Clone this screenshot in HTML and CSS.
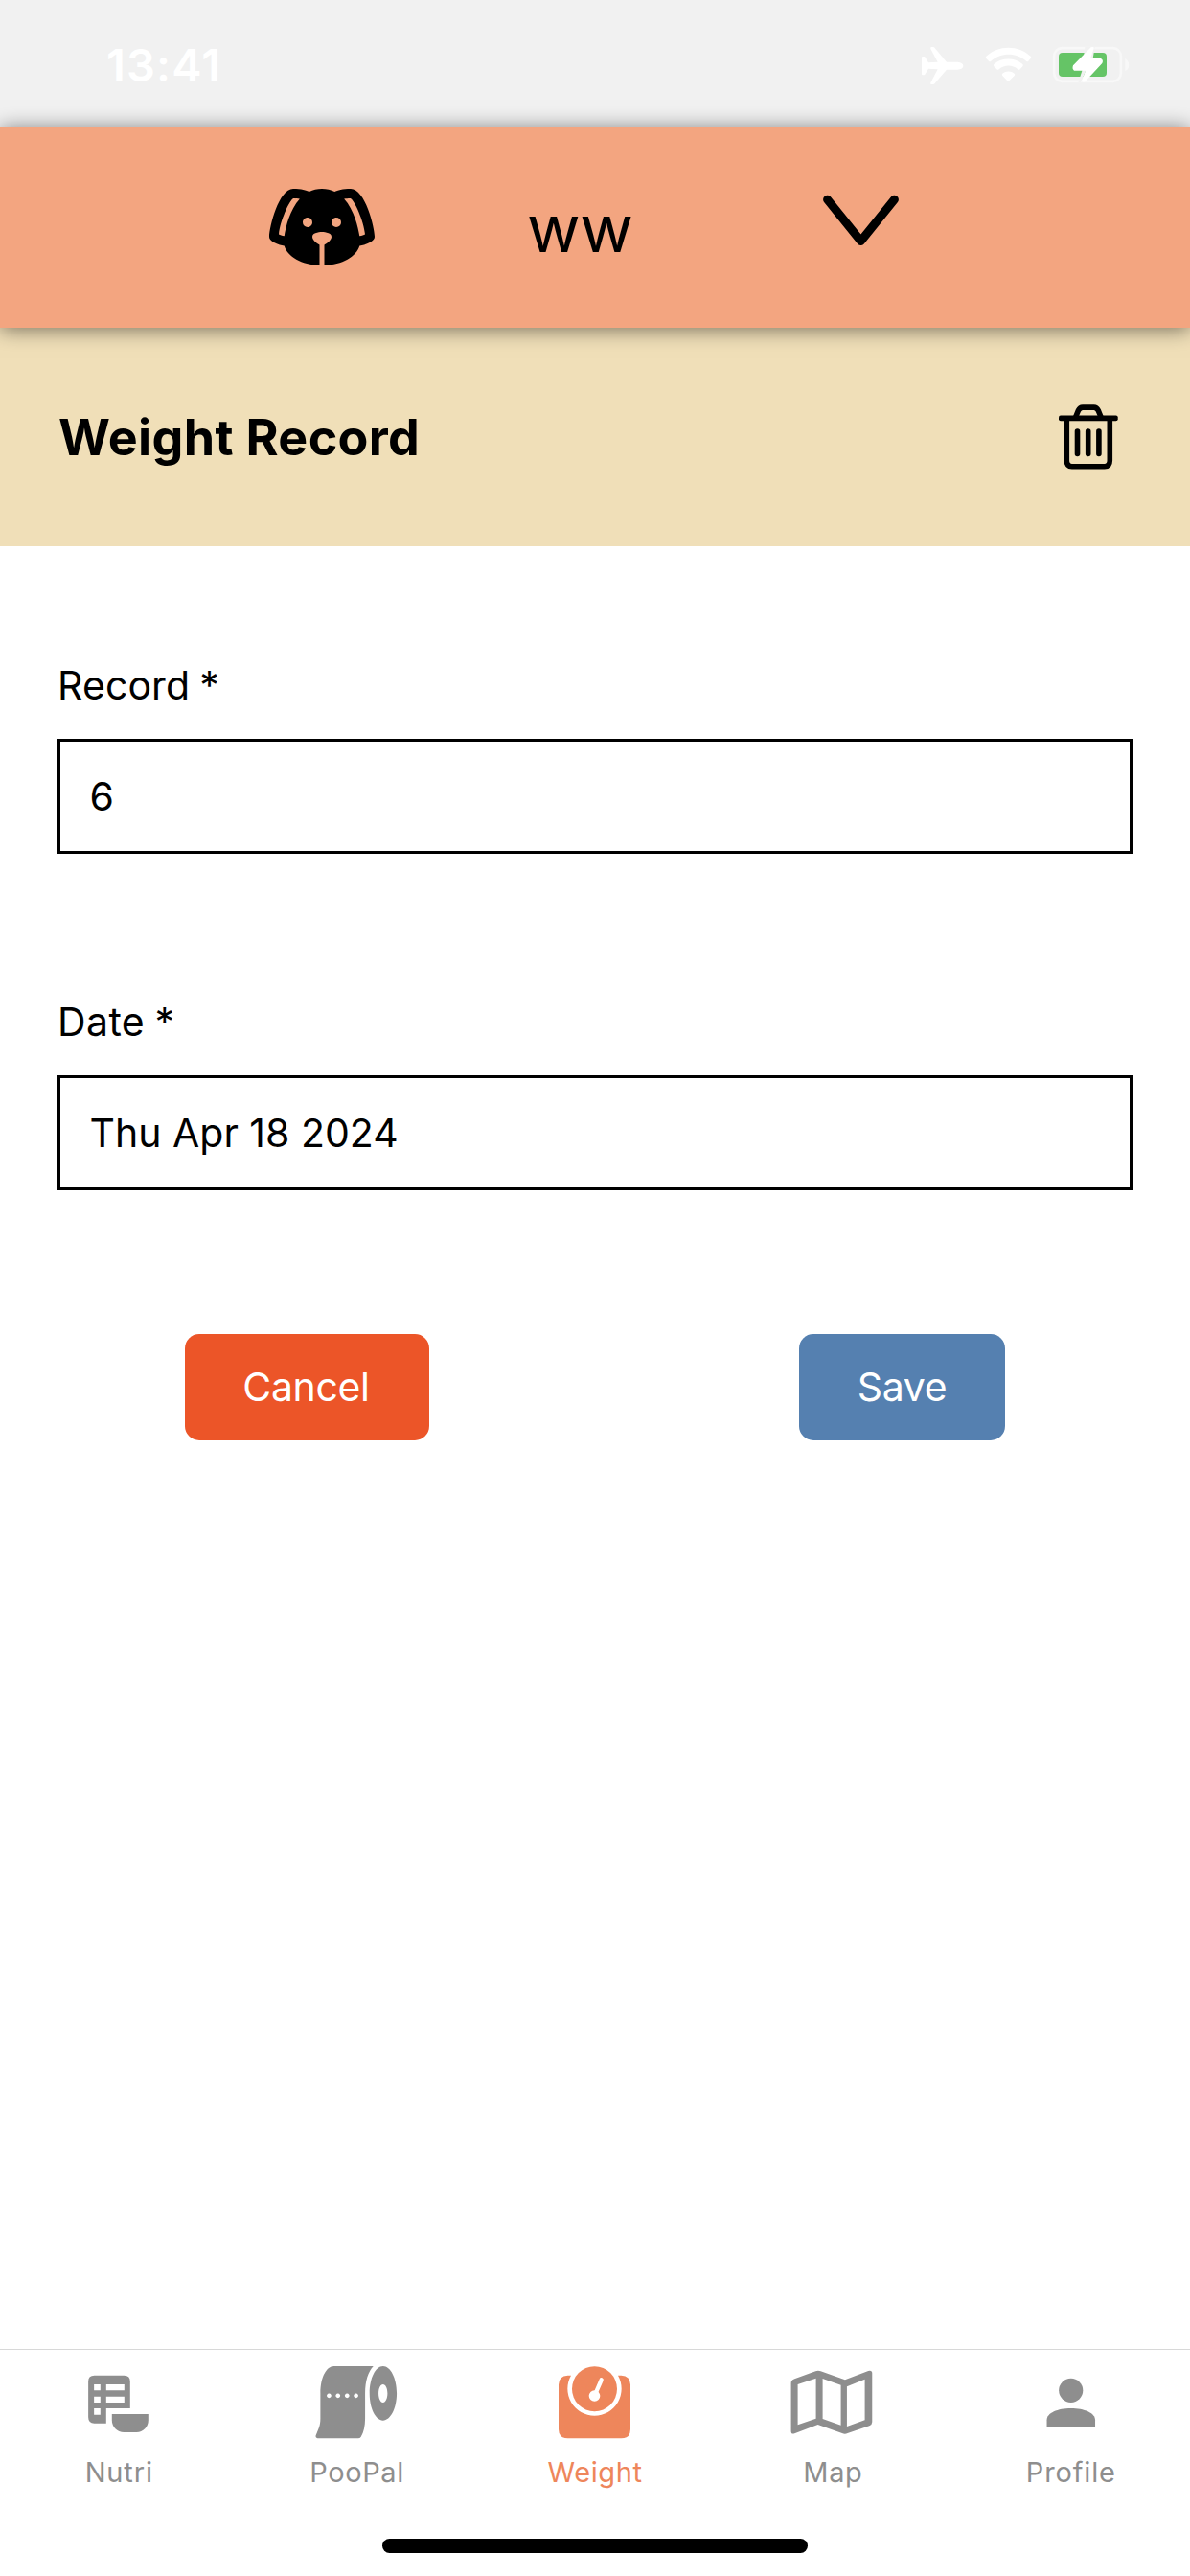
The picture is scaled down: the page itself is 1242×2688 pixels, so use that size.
FILE: index.html
```html
<!DOCTYPE html>
<html lang="en">
<head>
<meta charset="utf-8">
<title>Weight Record</title>
<link rel="stylesheet" href="styles.css">
</head>
<body>
<div class="screen">
  <div class="status">
    <span class="time">13:41</span>
    <div class="status-icons">
      <svg class="plane" width="45" height="42" viewBox="183 144 135 126" fill="#fff"><path d="M186 180q0-3 3-3h5q2 0 3 2l10 17 29-2-22-41q-2-6 3-6h5q3 0 5 3l37 44h34q18 2 18 12t-18 12h-34l-37 43q-2 3-5 3h-6q-4 0-2-5l22-42-29-2-10 17q-2 3-4 3h-4q-3 0-3-3z"/></svg>
      <svg class="wifi" width="49" height="42" viewBox="384 144 147 126" fill="#fff"><path d="M388 176q-3 3 0 7l8 8q3 3 7 0c31-28 79-28 110 0q4 3 7 0l7-8q3-4 0-7c-39-36-100-36-139 0z"/><path d="M412 201q-3 3 0 7l9 9q3 3 7 0c17-15 42-15 59 0q4 3 7 0l8-9q3-4 0-7c-26-22-64-22-90 0z"/><path d="M438 231q-2 3 1 6l15 16q3 3 6 0l16-16q3-3 1-6c-11-10-28-10-39 0z"/></svg>
      <svg class="battery" width="82" height="42" viewBox="594 144 246 126"><rect x="600.500" y="150.500" width="209" height="104" rx="25" fill="none" stroke="#f8f8f8" stroke-width="8"/><path d="M823 183q12 8 12 21t-12 18z" fill="#f8f8f8"/><rect x="615" y="165" width="150" height="75" rx="12" fill="#65c466"/><path d="M697 146 728 146 722 183 700 220 684 258 676 258 688 222Z" fill="#f1f1f1"/><path d="M716 148q3-2 7-1 3 1 2 5l-11 31h33q9 5 4 15l-53 57q-4 3-8 1t-2-6l11-29h-36q-7-5-3-16z" fill="#fff"/></svg>
    </div>
  </div>
  <header class="petbar">
    <svg class="dog" width="120" height="120" viewBox="0 0 24 24"><path d="M18,4C16.29,4 15.25,4.33 14.65,4.61C13.88,4.23 13,4 12,4C11,4 10.12,4.23 9.35,4.61C8.75,4.33 7.71,4 6,4C3,4 1,12 1,14C1,14.83 2.32,15.59 4.14,15.9C4.78,18.14 7.8,19.85 11.5,20V15.72C10.91,15.35 10,14.68 10,14C10,13 12,13 12,13C12,13 14,13 14,14C14,14.68 13.09,15.35 12.5,15.72V20C16.2,19.85 19.22,18.14 19.86,15.9C21.68,15.59 23,14.83 23,14C23,12 21,4 18,4M4.15,13.87C3.65,13.75 3.26,13.61 3,13.5C3.25,10.73 5.2,6.4 6.05,6C6.59,6 7,6.06 7.37,6.11C5.27,8.42 4.44,12.04 4.15,13.87M9,12A1,1 0 0,1 8,11C8,10.46 8.45,10 9,10A1,1 0 0,1 10,11C10,11.56 9.55,12 9,12M15,12A1,1 0 0,1 14,11C14,10.46 14.45,10 15,10A1,1 0 0,1 16,11A1,1 0 0,1 15,12M19.85,13.87C19.56,12.04 18.73,8.42 16.63,6.11C17,6.06 17.41,6 17.95,6C18.8,6.4 20.75,10.73 21,13.5C20.75,13.61 20.36,13.75 19.85,13.87Z"/></svg>
    <span class="petname">ww</span>
    <svg class="chevron" width="80" height="54" viewBox="0 0 80 54" fill="none" stroke="#000" stroke-width="9" stroke-linecap="round" stroke-linejoin="round"><path d="M4.600 5.200 39.500 48.500 74.400 5.200"/></svg>
  </header>
  <section class="titlebar">
    <h1 class="title">Weight Record</h1>
    <svg class="trash" width="62" height="68" viewBox="0 0 62 68" fill="none" stroke="#000" stroke-width="5.600"><rect x="0" y="11.400" width="61.700" height="5.800" rx="2" fill="#000" stroke="none"/><path d="M17.700 13 20.500 6.200Q22 3.100 25 3.100H36.700Q39.700 3.100 41.200 6.200L44 13"/><path d="M8.300 15V58.500Q8.300 64.700 13.800 64.700H47.800Q53.300 64.700 53.300 58.500V15"/><path d="M19.500 28V51.500M30.700 28V51.500M41.900 28V51.500" stroke-linecap="round"/></svg>
  </section>
  <main class="form">
    <div class="field">
      <label class="label">Record *</label>
      <div class="input">6</div>
    </div>
    <div class="field">
      <label class="label label-date">Date *</label>
      <div class="input">Thu Apr 18 2024</div>
    </div>
    <div class="actions">
      <button class="btn cancel">Cancel</button>
      <button class="btn save">Save</button>
    </div>
  </main>
  <nav class="tabs">
    <div class="tab">
      <svg width="90" height="80" viewBox="117.600 108 270 240" fill="currentColor"><path fill-rule="evenodd" d="M176 146H269Q288 146 288 165V249H213V296H176Q157 296 157 277V165Q157 146 176 146ZM175 174V193H195V174ZM213 174V193H270V174ZM175 212V231H195V212ZM213 212V231H270V212ZM175 249V269H195V249Z"/><path d="M231 267H345V286C345 308 329 324 308 324H269C247 324 231 308 231 286Z"/></svg>
      <span class="tab-text wide">Nutri</span>
    </div>
    <div class="tab">
      <svg width="90" height="80" viewBox="862.800 108 270 240" fill="currentColor"><path fill-rule="evenodd" d="M924 117H1048C1032 134 1022 162 1022 202V281C1022 306 1017 324 1009 338Q1006 343 1000 343H873Q865 341 868 333C876 313 882 303 882 281V202C882 150 902 117 924 117ZM909 202.500a7 7 0 1 0 .1 0ZM937 202.500a7 7 0 1 0 .1 0ZM965.500 202.500a7 7 0 1 0 .1 0ZM993.500 202.500a7 7 0 1 0 .1 0Z"/><path fill-rule="evenodd" d="M1078 117C1101 117 1121 154 1121 202S1101 287 1078 287 1036 250 1036 202 1055 117 1078 117ZM1078 174C1070 174 1064 186 1064 202S1070 231 1078 231 1092 218 1092 202 1086 174 1078 174Z"/></svg>
      <span class="tab-text">PooPal</span>
    </div>
    <div class="tab active">
      <svg width="90" height="80" viewBox="108 108 270 240"><path fill="currentColor" d="M158 146H168A84.500 84.500 0 1 0 315 146H325Q354 148 354 175V315Q354 343 325 343H158Q129 343 129 315V175Q129 148 158 146Z"/><circle cx="241.500" cy="188" r="70.500" fill="currentColor"/><circle cx="241.500" cy="210" r="17.500" fill="#fff"/><path d="M244 204 263 160" stroke="#fff" stroke-width="13" stroke-linecap="round"/></svg>
      <span class="tab-text">Weight</span>
    </div>
    <div class="tab">
      <svg width="90" height="80" viewBox="853.200 108 270 240" fill="currentColor"><path fill-rule="evenodd" d="M869 157 935 133Q943 130 951 133L1027 160 1100 132Q1112 129 1112 139V292Q1112 300 1103 304L1035 327Q1027 331 1018 327L942 300 869 328Q858 331 858 320V170Q858 161 869 157ZM879 174V301L936 281V155ZM957 156V282L1014 302V176ZM1033 181V306L1089 286V158Z"/></svg>
      <span class="tab-text">Map</span>
    </div>
    <div class="tab">
      <svg width="90" height="80" viewBox="158.400 108 270 240" fill="currentColor"><circle cx="292.500" cy="193" r="37.700"/><path d="M217 306V286C217 263 251 249 292.500 249S368.500 263 368.500 286V306Z"/></svg>
      <span class="tab-text wide">Profile</span>
    </div>
  </nav>
  <div class="home-row"><div class="home"></div></div>
</div>
</body>
</html>
```

FILE: styles.css
```css
* { box-sizing: border-box; }
body { margin: 0; background: #fff; }
.screen {
  width: 1242px;
  height: 2688px;
  display: flex;
  flex-direction: column;
  overflow: hidden;
  font-family: Inter, "Liberation Sans", sans-serif;
  color: #000;
}
svg { display: block; flex: none; }

.status {
  height: 132px;
  flex: none;
  background: #f1f1f1;
  display: flex;
  justify-content: space-between;
  align-items: flex-start;
  padding: 48px 62px 0 111px;
}
.time { font-size: 47px; line-height: 40px; font-weight: 600; letter-spacing: 1.15px; color: #fff; }
.status-icons { display: flex; }
.wifi { margin-left: 22px; }
.battery { margin-left: 21px; }

.petbar {
  height: 210px;
  flex: none;
  position: relative;
  z-index: 1;
  background: #f3a580;
  box-shadow: 0 2px 20px rgba(0, 0, 0, .5);
  display: flex;
  align-items: flex-start;
  padding-left: 276px;
}
.dog { margin-top: 45px; }
.petname {
  flex: none;
  width: 463px;
  margin-top: 73px;
  padding-left: 154px;
  font-size: 68px;
  line-height: 66px;
  letter-spacing: -.5px;
}
.chevron { margin-top: 71px; }

.titlebar {
  height: 228px;
  flex: none;
  background: #f0dfb8;
  display: flex;
  justify-content: space-between;
  align-items: flex-start;
  padding: 80px 75px 0 61px;
}
.title {
  margin: 0;
  padding-top: 3px;
  font-size: 52px;
  line-height: 64px;
  font-weight: 700;
  letter-spacing: .35px;
}

.form { flex: 1; padding: 120px 60px 0; }
.field { height: 351px; }
.label {
  display: block;
  height: 81px;
  line-height: 50px;
  font-size: 41px;
  letter-spacing: .1px;
  word-spacing: -1.5px;
}
.label-date { letter-spacing: .4px; }
.input {
  height: 120px;
  border: 3px solid #000;
  padding-left: 30.5px;
  font-size: 41px;
  line-height: 114px;
}
.actions { display: flex; justify-content: space-between; padding: 0 133px; }
.btn {
  height: 111px;
  border: 0;
  border-radius: 15px;
  padding: 0;
  font: 400 41px/111px Inter, "Liberation Sans", sans-serif;
  letter-spacing: -.35px;
  color: #fff;
}
.cancel { width: 255px; padding-right: 2px; background: #ec5528; }
.save { width: 215px; background: #5580b0; }

.tabs {
  height: 180px;
  flex: none;
  border-top: 1px solid #d8d8d8;
  display: grid;
  grid-template-columns: repeat(5, 1fr);
}
.tab {
  display: flex;
  flex-direction: column;
  align-items: center;
  padding-top: 14px;
  color: #8e8e8e;
}
.active { color: #ee865b; }
.tab-text { margin-top: 14px; font-size: 29px; line-height: 40px; letter-spacing: .6px; }
.wide { letter-spacing: .85px; }

.home-row { height: 57px; flex: none; display: flex; justify-content: center; padding-top: 18px; }
.home { width: 444px; height: 15px; border-radius: 8px; background: #000; }
```
